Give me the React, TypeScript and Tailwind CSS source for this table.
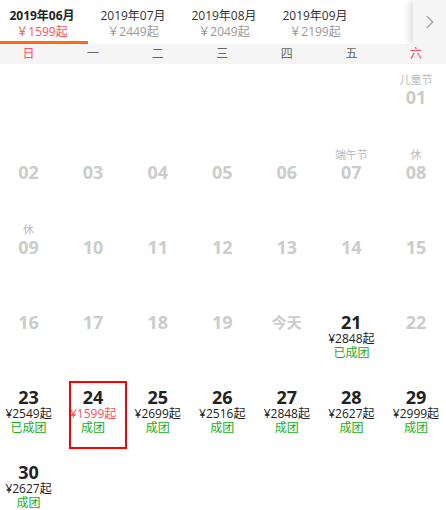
import { ChevronRight } from 'lucide-react'

type Day = {
  d?: string
  label?: string
  price?: string
  status?: string
  past?: boolean
  selected?: boolean
}

const TABS = [
  { month: '2019年06月', price: '￥1599起', active: true },
  { month: '2019年07月', price: '￥2449起' },
  { month: '2019年08月', price: '￥2049起' },
  { month: '2019年09月', price: '￥2199起' },
]

const WEEK = ['日', '一', '二', '三', '四', '五', '六']

const DAYS: Day[] = [
  {}, {}, {}, {}, {}, {},
  { d: '01', label: '儿童节', past: true },
  { d: '02', past: true },
  { d: '03', past: true },
  { d: '04', past: true },
  { d: '05', past: true },
  { d: '06', past: true },
  { d: '07', label: '端午节', past: true },
  { d: '08', label: '休', past: true },
  { d: '09', label: '休', past: true },
  { d: '10', past: true },
  { d: '11', past: true },
  { d: '12', past: true },
  { d: '13', past: true },
  { d: '14', past: true },
  { d: '15', past: true },
  { d: '16', past: true },
  { d: '17', past: true },
  { d: '18', past: true },
  { d: '19', past: true },
  { d: '今天', past: true },
  { d: '21', price: '¥2848起', status: '已成团' },
  { d: '22', past: true },
  { d: '23', price: '¥2549起', status: '已成团' },
  { d: '24', price: '¥1599起', status: '成团', selected: true },
  { d: '25', price: '¥2699起', status: '成团' },
  { d: '26', price: '¥2516起', status: '成团' },
  { d: '27', price: '¥2848起', status: '成团' },
  { d: '28', price: '¥2627起', status: '成团' },
  { d: '29', price: '¥2999起', status: '成团' },
  { d: '30', price: '¥2627起', status: '成团' },
]

export default function App() {
  return (
    <div className="relative h-[510px] w-[446px] overflow-hidden bg-white font-['Open_Sans','Noto_Sans_CJK_SC',sans-serif]">
      {/* month tabs */}
      <div className="relative h-[44px] overflow-hidden">
        <div className="-ml-[3.5px] flex">
          {TABS.map((t) => (
            <div
              key={t.month}
              className={`flex h-[44px] w-[91px] shrink-0 flex-col items-center pt-[8px] text-[12px] leading-[16px] ${
                t.active ? 'border-b-[3px] border-[#ff6a13]' : ''
              }`}
            >
              <span className={t.active ? 'font-bold text-[#222]' : 'text-[#333]'}>{t.month}</span>
              <span className={t.active ? 'text-[#ff4f5a]' : 'text-[#999]'}>{t.price}</span>
            </div>
          ))}
        </div>
        <div className="absolute right-0 top-0 flex h-[44px] w-[33px] items-center justify-center bg-[#f5f5f5] shadow-[-4px_0_6px_rgba(0,0,0,0.12)]">
          <ChevronRight className="h-[22px] w-[22px] text-[#aaa]" strokeWidth={1.75} />
        </div>
      </div>

      {/* weekdays */}
      <div className="-ml-[3.75px] grid h-[20px] w-[452px] grid-cols-7 bg-[#f5f5f5] text-[12px] leading-[20px]">
        {WEEK.map((w, i) => (
          <div key={w} className={`text-center ${i === 0 || i === 6 ? 'text-[#ff4f5a]' : 'text-[#666]'}`}>
            {w}
          </div>
        ))}
      </div>

      {/* days */}
      <div className="-ml-[3.75px] grid w-[452px] grid-cols-7">
        {DAYS.map((day, i) => (
          <div key={i} className="relative flex h-[75px] flex-col items-center pt-[9px]">
            {day.selected && (
              <div className="absolute left-[8.5px] top-[17px] h-[68px] w-[58px] border-2 border-[#f00]" />
            )}
            <span className="h-[14px] text-[11px] leading-[14px] text-[#bbb]">{day.label}</span>
            {day.d && (
              <span
                className={`h-[20px] leading-[20px] font-bold ${day.d === '今天' ? 'text-[15px]' : 'text-[18px]'} ${
                  day.past ? 'text-[#ccc]' : 'text-[#222]'
                }`}
              >
                {day.d}
              </span>
            )}
            {day.price && (
              <span
                className={`text-[12px] leading-[14px] ${day.selected ? 'text-[#ff4f5a]' : 'text-[#222]'}`}
              >
                {day.price}
              </span>
            )}
            {day.status && <span className="text-[12px] leading-[14px] text-[#1aad19]">{day.status}</span>}
          </div>
        ))}
      </div>
    </div>
  )
}
